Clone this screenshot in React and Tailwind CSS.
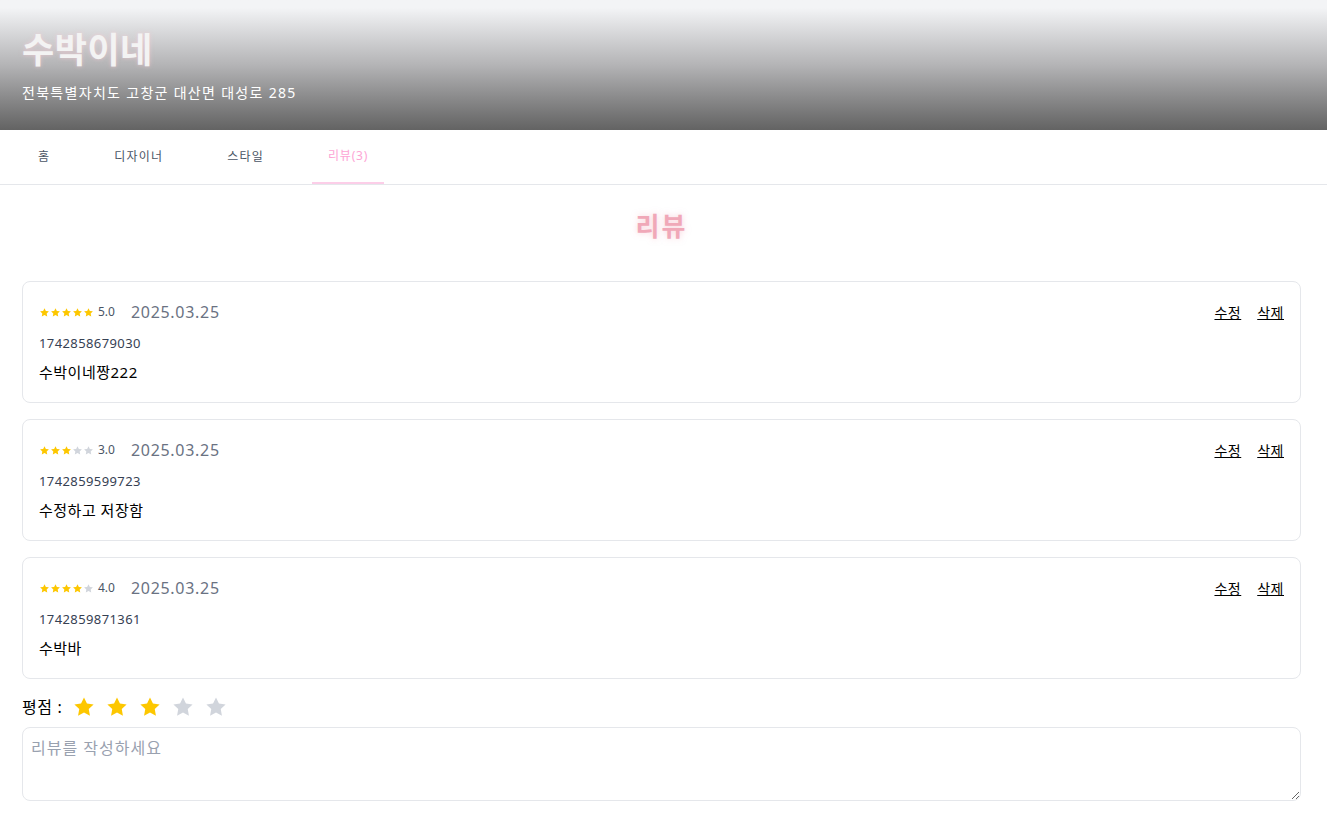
import React, { useState } from 'react';

const reviews = [
  { id: '1742858679030', rating: 5, date: '2025.03.25', content: '수박이네짱222' },
  { id: '1742859599723', rating: 3, date: '2025.03.25', content: '수정하고 저장함' },
  { id: '1742859871361', rating: 4, date: '2025.03.25', content: '수박바' },
];

const tabs = ['홈', '디자이너', '스타일', '리뷰(3)'];

function Star({ filled, size }) {
  return (
    <svg width={size} height={size} viewBox="0 0 24 24" className={filled ? 'text-yellow-400' : 'text-gray-300'}>
      <path
        fill="currentColor"
        d="M12 2.5l2.94 6.1 6.66.9-4.86 4.62 1.2 6.62L12 17.55l-5.94 3.19 1.2-6.62L2.4 9.5l6.66-.9L12 2.5z"
      />
    </svg>
  );
}

export default function App() {
  const [rating, setRating] = useState(3);

  return (
    <div className="min-h-screen bg-white font-['Noto_Sans','Noto_Sans_CJK_KR',sans-serif]">
      {/* Header */}
      <div className="h-[130px] bg-linear-to-b from-[#f3f4f6] from-[6%] via-[#b4b4b6] via-[50%] to-[#636363] px-[22px] pt-[28px]">
        <h1 className="text-[35px] leading-[44px] font-semibold tracking-[0.5px] text-[#f3f3f3] [text-shadow:0_0_4px_rgba(255,200,210,0.6)]">
          수박이네
        </h1>
        <p className="mt-[10px] text-[14px] tracking-[1.3px] text-white">전북특별자치도 고창군 대산면 대성로 285</p>
      </div>

      {/* Tabs */}
      <div className="flex gap-8 px-[22px] border-b border-gray-200">
        {tabs.map((t, i) => (
          <div
            key={t}
            className={
              i === 3
                ? 'px-4 h-[54px] flex items-center text-[12px] tracking-[0.8px] text-pink-300 border-b-2 border-pink-200 -mb-px'
                : 'px-4 h-[54px] flex items-center text-[12px] tracking-[1.2px] text-gray-600'
            }
          >
            {t}
          </div>
        ))}
      </div>

      {/* Reviews */}
      <div className="pl-[22px] pr-[26px]">
        <h2 className="text-center text-[26px] font-bold tracking-[2px] text-[#f0a8b8] mt-[22px] mb-[35px] [text-shadow:0_0_6px_rgba(244,166,184,0.5)]">
          리뷰
        </h2>

        <div className="flex flex-col gap-4">
          {reviews.map((r) => (
            <div key={r.id} className="border border-gray-200 rounded-lg px-4 pt-[18px] h-[122px]">
              <div className="flex items-center justify-between">
                <div className="flex items-center">
                  <div className="flex">
                    {[1, 2, 3, 4, 5].map((n) => (
                      <Star key={n} filled={n <= r.rating} size={11} />
                    ))}
                  </div>
                  <span className="ml-[4px] text-[12px] text-gray-600">{r.rating.toFixed(1)}</span>
                  <span className="ml-[16px] text-[16px] tracking-[0.7px] text-gray-500">{r.date}</span>
                </div>
                <div className="flex gap-4 text-[14px] tracking-[0.5px] text-black">
                  <button className="underline">수정</button>
                  <button className="underline">삭제</button>
                </div>
              </div>
              <p className="mt-[10px] text-[13px] tracking-[0.4px] text-gray-700">{r.id}</p>
              <p className="mt-[7px] text-[15px] tracking-[0.5px] text-black">{r.content}</p>
            </div>
          ))}
        </div>

        <div className="flex items-center mt-[16px] h-[24px]">
          <span className="text-[16px] tracking-[0.6px] text-black mr-[10px]">평점 :</span>
          <div className="flex gap-[9px]">
            {[1, 2, 3, 4, 5].map((n) => (
              <button key={n} onClick={() => setRating(n)}>
                <Star filled={n <= rating} size={24} />
              </button>
            ))}
          </div>
        </div>

        <textarea
          className="mt-[8px] block w-full h-[74px] border border-gray-200 rounded-lg p-2 text-[16px] tracking-[1px] placeholder:text-gray-400 outline-none"
          placeholder="리뷰를 작성하세요"
        ></textarea>
      </div>
    </div>
  );
}
